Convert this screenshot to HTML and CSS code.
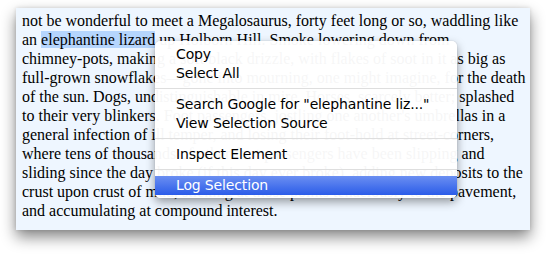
FILE: index.html
```html
<!DOCTYPE html>
<html>
<head>
<meta charset="utf-8">
<link rel="stylesheet" href="styles.css">
</head>
<body>
<div class="stage">
  <div class="page">
    <div class="text">
      <div class="line">not be wonderful to meet a Megalosaurus, forty feet long or so, waddling like</div>
      <div class="line">an <span class="sel">elephantine lizard</span> up Holborn Hill. Smoke lowering down from</div>
      <div class="line">chimney-pots, making a soft black drizzle, with flakes of soot in it as big as</div>
      <div class="line">full-grown snowflakes—gone into mourning, one might imagine, for the death</div>
      <div class="line">of the sun. Dogs, undistinguishable in mire. Horses, scarcely better; splashed</div>
      <div class="line">to their very blinkers. Foot passengers, jostling one another's umbrellas in a</div>
      <div class="line">general infection of ill temper, and losing their foot-hold at street-corners,</div>
      <div class="line">where tens of thousands of other foot passengers have been slipping and</div>
      <div class="line">sliding since the day broke (if this day ever broke), adding new deposits to the</div>
      <div class="line">crust upon crust of mud, sticking at those points tenaciously to the pavement,</div>
      <div class="line">and accumulating at compound interest.</div>
    </div>
  </div>
  <div class="menu">
    <div class="item">Copy</div>
    <div class="item">Select All</div>
    <div class="sep"></div>
    <div class="item">Search Google for "elephantine liz..."</div>
    <div class="item">View Selection Source</div>
    <div class="sep"></div>
    <div class="item">Inspect Element</div>
    <div class="sep"></div>
    <div class="item active">Log Selection</div>
  </div>
</div>
</body>
</html>
```
FILE: styles.css
```css
html, body {
  margin: 0;
  padding: 0;
  background: #ffffff;
}
.stage {
  position: relative;
  width: 546px;
  height: 255px;
  overflow: hidden;
}
.page {
  margin: 8px 0 0 16px;
  width: 514px;
  height: 222px;
  background: #eef6ff;
  box-shadow: 0 7px 14px rgba(0, 0, 0, 0.48), 0 0 4px rgba(0, 0, 0, 0.12);
  overflow: hidden;
  padding: 3px 0 0 6px;
  box-sizing: border-box;
}
.text {
  font-family: "Liberation Serif", "Times New Roman", serif;
  font-size: 16px;
  line-height: 19px;
  color: #000;
}
.line {
  white-space: nowrap;
}
.sel {
  background: #b5d5fd;
}
.menu {
  position: absolute;
  left: 155px;
  top: 41px;
  width: 302px;
  padding: 4px 0 3px;
  background: rgba(255, 255, 255, 0.965);
  border-radius: 5px;
  box-shadow: 0 4px 10px rgba(0, 0, 0, 0.38), 0 0 1px rgba(0, 0, 0, 0.3);
  font-family: "DejaVu Sans", "Lucida Grande", sans-serif;
  font-size: 14px;
  letter-spacing: -0.15px;
  color: #000;
}
.item {
  height: 19px;
  line-height: 19px;
  padding-left: 21px;
  white-space: nowrap;
}
.sep {
  height: 1px;
  margin: 5px 0 6px;
  background: #dedede;
}
.item.active {
  margin-top: 1px;
  color: #fff;
  background: linear-gradient(#6b8ff1, #2b5ce9);
}
```
